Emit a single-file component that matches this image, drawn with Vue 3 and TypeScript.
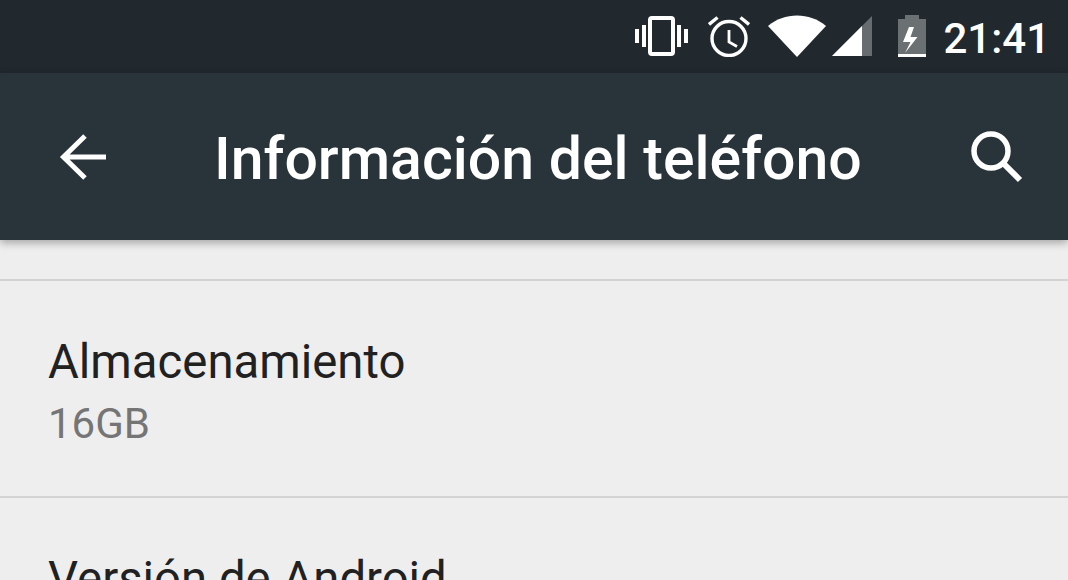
<template>
  <div class="phone">
    <div class="status-bar">
      <svg class="ic-vibrate" viewBox="0 0 53 40" width="53" height="40">
        <rect x="0" y="13" width="4" height="14" fill="#fff" />
        <rect x="7" y="9" width="4" height="22" fill="#fff" />
        <rect x="15" y="2" width="23" height="36" rx="2" fill="none" stroke="#fff" stroke-width="4" />
        <rect x="42" y="9" width="4" height="22" fill="#fff" />
        <rect x="49" y="13" width="4" height="14" fill="#fff" />
      </svg>
      <svg class="ic-alarm" viewBox="0 0 42 42" width="42" height="42">
        <circle cx="21" cy="23.500" r="17" fill="none" stroke="#fff" stroke-width="3.400" />
        <path d="M21 15v12l8 4.500" fill="none" stroke="#fff" stroke-width="2.800" />
        <path d="M1 9.500 9.500 2.500M41 9.500 32.500 2.500" fill="none" stroke="#fff" stroke-width="3.400" />
      </svg>
      <svg class="ic-wifi" viewBox="0 0 58 42" width="58" height="42">
        <path d="M0 11C16-3 42-3 58 11L29 42Z" fill="#fff" />
      </svg>
      <svg class="ic-signal" viewBox="0 0 40 42" width="40" height="42">
        <path d="M0 41 40 1V41Z" fill="#666c70" />
        <path d="M0 41 30 11V41Z" fill="#fff" />
      </svg>
      <svg class="ic-battery" viewBox="0 0 28 42" width="28" height="42">
        <path d="M7 0h14v4h7v35H0V4h7Z" fill="#6b7073" />
        <rect x="0" y="39" width="28" height="3" fill="#fff" />
        <path d="M11 12h5L12.500 22h7L7 38l5.500-11H5Z" fill="#fff" />
      </svg>
      <span class="clock">21:41</span>
    </div>

    <header class="toolbar">
      <svg class="ic-back" viewBox="0 0 48 48" width="48" height="48">
        <path d="M47 24H4M26 3 4.500 24 26 45" fill="none" stroke="#fff" stroke-width="5" />
      </svg>
      <h1 class="title">Información del teléfono</h1>
      <svg class="ic-search" viewBox="0 0 54 54" width="54" height="54">
        <circle cx="22" cy="22" r="17" fill="none" stroke="#fff" stroke-width="5.500" />
        <path d="M34 34 51 51" stroke="#fff" stroke-width="6" fill="none" />
      </svg>
    </header>

    <main class="list">
      <div class="row" v-for="item in items" :key="item.label">
        <div class="label">{{ item.label }}</div>
        <div class="value" v-if="item.value">{{ item.value }}</div>
      </div>
    </main>
  </div>
</template>

<script setup lang="ts">
const items = [
  { label: 'Almacenamiento', value: '16GB' },
  { label: 'Versión de Android', value: '' },
];
</script>

<style>
html,
body {
  margin: 0;
  overflow: hidden;
}
</style>

<style scoped>
.phone {
  width: 1068px;
  height: 580px;
  overflow: hidden;
  background: #eeeeee;
  font-family: Roboto, "Liberation Sans", sans-serif;
}

.status-bar {
  height: 73px;
  background: #21292e;
  display: flex;
  align-items: center;
  padding: 0 18px 1px 0;
  justify-content: flex-end;
  box-sizing: border-box;
}

.ic-vibrate {
  margin-right: 20px;
}

.ic-alarm {
  margin-right: 18px;
}

.ic-wifi {
  margin-right: 6px;
}

.ic-signal {
  margin-right: 26px;
}

.ic-battery {
  margin-right: 17px;
}

.clock {
  color: #fff;
  font-size: 42px;
  font-weight: 500;
  line-height: 42px;
  margin-top: 5px;
}

.toolbar {
  height: 167px;
  background: #28333a;
  display: flex;
  align-items: center;
  padding: 0 45px 0 59px;
  box-sizing: border-box;
  box-shadow: 0 3px 8px rgba(0, 0, 0, 0.3);
  position: relative;
}

.title {
  flex: 1;
  margin: 4px 0 0 107px;
  color: #fff;
  font-size: 59px;
  font-weight: 500;
  line-height: 64px;
}

.ic-search {
  margin-bottom: 2px;
}

.list {
  padding-top: 39px;
}

.row {
  border-top: 2px solid #d3d3d3;
  height: 217px;
  padding: 49px 48px 0;
  box-sizing: border-box;
}

.label {
  color: #212121;
  font-size: 47.300px;
  line-height: 65px;
}

.value {
  color: #757575;
  font-size: 42px;
  line-height: 58px;
}
</style>
